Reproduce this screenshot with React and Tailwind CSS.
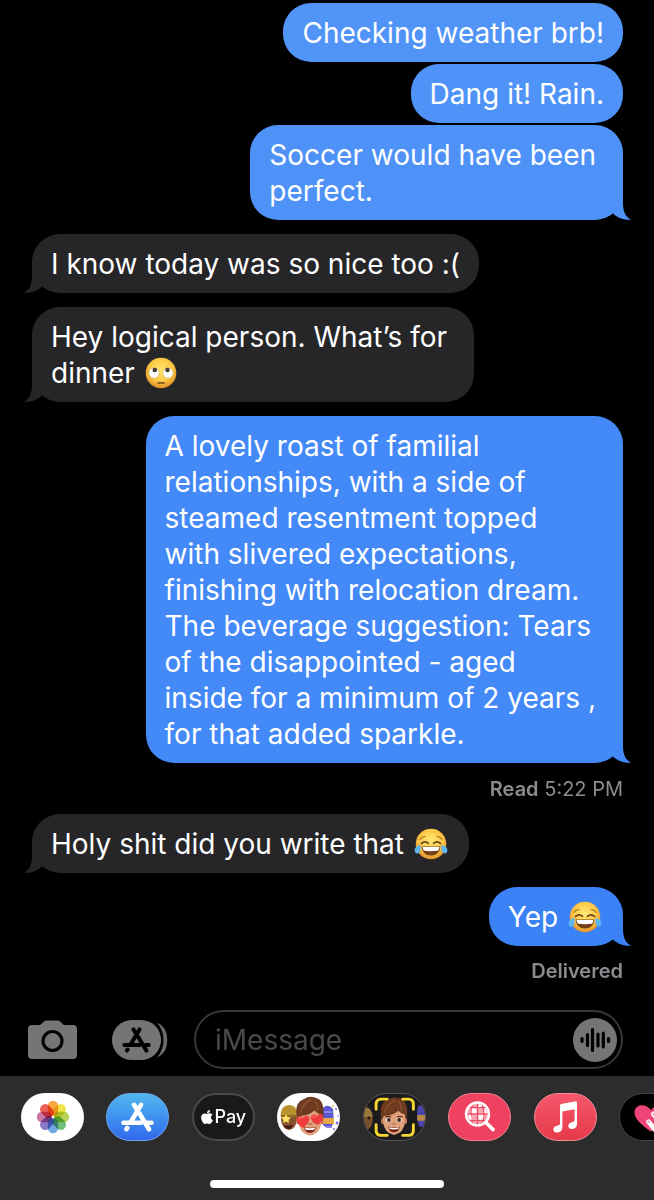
import { FaApple } from "react-icons/fa";

function Tail({ side }) {
  const mine = side === "right";
  return (
    <svg
      aria-hidden="true"
      viewBox="0 0 32 30"
      className={
        mine
          ? "absolute bottom-0 -right-2 h-[30px] w-8 fill-current"
          : "absolute bottom-0 -left-2 h-[30px] w-8 -scale-x-100 fill-current"
      }
    >
      <path d="M24 0V13C24 21.5 26.5 27 32 29.6C25.500 30.5 18.500 28 14 23.500L4 10V0Z" />
    </svg>
  );
}

function RollingEyes() {
  return (
    <svg role="img" aria-label="rolling eyes" viewBox="0 0 32 32" className="mx-0.5 -mt-1 inline-block h-8 w-8">
      <defs>
        <radialGradient id="rollFace" cx=".5" cy=".4" r=".6">
          <stop offset="0" stopColor="#ffe46b" />
          <stop offset=".6" stopColor="#fcca45" />
          <stop offset="1" stopColor="#e08f25" />
        </radialGradient>
      </defs>
      <circle cx="16" cy="16" r="15.300" fill="url(#rollFace)" />
      <circle cx="9" cy="16" r="5.200" fill="#fff" stroke="#c99a49" strokeWidth=".5" />
      <circle cx="23" cy="16" r="5.200" fill="#fff" stroke="#c99a49" strokeWidth=".5" />
      <circle cx="9.800" cy="13" r="2.300" fill="#473a34" />
      <circle cx="22.500" cy="13" r="2.300" fill="#473a34" />
      <path d="M13 26H19" stroke="#6e4418" strokeWidth="1.600" strokeLinecap="round" />
    </svg>
  );
}

function TearsOfJoy() {
  return (
    <svg role="img" aria-label="tears of joy" viewBox="0 0 34 32" className="mx-0.5 -mt-1 inline-block h-8 w-[34px]">
      <defs>
        <radialGradient id="joyFace" cx=".5" cy=".4" r=".6">
          <stop offset="0" stopColor="#ffe878" />
          <stop offset=".6" stopColor="#fdca48" />
          <stop offset="1" stopColor="#e2902a" />
        </radialGradient>
      </defs>
      <circle cx="17" cy="16" r="15.300" fill="url(#joyFace)" />
      <path d="M6 11.500Q8 8.500 11 8.500M28 11.500Q26 8.500 23 8.500" stroke="#ab7420" strokeWidth="1.200" fill="none" strokeLinecap="round" />
      <path d="M7.500 15.500Q11 12.500 14.500 15.300M19.500 15.300Q23 12.500 26.500 15.500" stroke="#6b421a" strokeWidth="1.700" fill="none" strokeLinecap="round" />
      <path d="M7.500 18.500H26.500Q25.500 27.500 17 27.500Q8.500 27.500 7.500 18.500Z" fill="#76401a" />
      <path d="M8.500 19H25.500Q25 22.500 23.500 22.800Q17 23.600 10.500 22.800Q9 22.500 8.500 19Z" fill="#fff" />
      <path d="M6.500 17Q.5 18 .6 22.500Q1 26 4 25.500Q7.500 24 6.500 17ZM27.500 17Q33.500 18 33.400 22.500Q33 26 30 25.500Q26.500 24 27.500 17Z" fill="#5eb6ee" />
    </svg>
  );
}

const EMOJI = { roll: RollingEyes, joy: TearsOfJoy };

function Bubble({ side, lines, emoji, tail = true, tone }) {
  const mine = side === "right";
  const Emoji = emoji ? EMOJI[emoji] : null;
  const wrapped = lines.length > 1;
  return (
    <div className={mine ? "flex justify-end" : "flex justify-start"}>
      <div className={`relative rounded-[28px] ${tone}`}>
        <div className="rounded-[28px] bg-current">
          <p
            className={`pt-3 pb-[11px] pl-[19px] text-[28px] leading-9 whitespace-nowrap text-white ${
              wrapped ? "pr-[27px]" : "pr-[19px]"
            }`}
          >
            {lines.map((line, i) => (
              <span key={line}>
                {i > 0 && <br />}
                {line}
              </span>
            ))}
            {Emoji && (
              <>
                {" "}
                <Emoji />
              </>
            )}
          </p>
        </div>
        {tail && <Tail side={side} />}
      </div>
    </div>
  );
}

function AppStoreGlyph({ className }) {
  return (
    <svg aria-hidden="true" viewBox="0 0 33 30" fill="none" stroke="currentColor" strokeWidth="4.600" strokeLinecap="round" className={className}>
      <path d="M13 2.800L15.500 7M20 2.800L9.500 20.500M18.500 11.500L28 27.300M2.500 20.800H20M26.500 20.800H30.500M6.200 26L5.500 27.200" />
    </svg>
  );
}

const PETALS = ["#f9a02e", "#ece034", "#b0cf45", "#63b86b", "#639fe0", "#7d6bbd", "#c4689f", "#ea4f48"];

function PhotosIcon() {
  return (
    <svg aria-hidden="true" viewBox="-17 -17 34 34" className="h-[34px] w-[34px]">
      {PETALS.map((color, i) => (
        <rect key={color} x="-5.200" y="-16.200" width="10.400" height="15" rx="5.200" fill={color} opacity=".9" transform={`rotate(${i * 45})`} className="mix-blend-multiply" />
      ))}
    </svg>
  );
}

function BoyHead({ hearts }) {
  return (
    <g>
      <ellipse cx="-11.500" cy="4" rx="2" ry="3.500" fill="#bd7857" />
      <ellipse cx="11.500" cy="4" rx="2" ry="3.500" fill="#bd7857" />
      <path d="M-11.500 -5Q-12 -13 0 -13Q12 -13 11.500 -5V4Q10.500 17 0 18.500Q-10.500 17 -11.500 4Z" fill="#e0a17d" />
      <path d="M-12.500 3Q-17 -14 -6 -18Q-1 -21.500 5 -19.500Q16 -17 13 3L11 -2.500Q7 -3.500 4.500 -6.500Q-1 -1.500 -10.500 -1Z" fill="#6e3b21" />
      <path d="M-9.500 -5Q-7 -14 1 -17M7.500 -7Q8.500 -12 5 -16" stroke="#8f5230" strokeWidth="1.400" fill="none" strokeLinecap="round" />
      {hearts ? (
        <g fill="#f13b3f">
          <path d="M-7 11C-13.500 7 -15 1.500 -11.500 -.5Q-8.500 -2 -7 1Q-4 -3 -1 0Q1.500 4 -7 11Z" />
          <path d="M8 8C.5 5 -.5 -.5 2.500 -2Q6 -3.500 7 -.5Q9.500 -5 12.500 -2Q15 2 8 8Z" />
          <path d="M-11 2Q-10 0 -9 1M3 .5Q4 -1.500 5 -.5" stroke="#ff9288" fill="none" strokeLinecap="round" />
        </g>
      ) : (
        <g>
          <ellipse cx="-5.500" cy="3" rx="2.700" ry="2" fill="#fff" />
          <ellipse cx="5.500" cy="3" rx="2.700" ry="2" fill="#fff" />
          <circle cx="-5.300" cy="3" r="1.900" fill="#352117" />
          <circle cx="5.300" cy="3" r="1.900" fill="#352117" />
          <path d="M-9 0Q-6 -1.500 -3 0M3 0Q6 -1.500 9 0" stroke="#5d321d" strokeWidth="1.300" fill="none" />
        </g>
      )}
      <path d="M-1.500 6.500Q0 8 1.500 6.500" stroke="#a9613f" strokeWidth="1.200" fill="none" />
      <path d="M-6 10Q0 11.500 6 10Q5 15.800 0 15.800Q-5 15.800 -6 10Z" fill="#7b221d" />
      <path d="M-5 10.500Q0 12 5 10.500L4.500 12.500Q0 13.500 -4.500 12.500Z" fill="#fff" />
    </g>
  );
}

function MemojiStickersIcon() {
  return (
    <svg aria-hidden="true" viewBox="0 0 63 48" className="h-12 w-full">
      <ellipse cx="12" cy="26" rx="8" ry="11" fill="#87532d" />
      <path d="M3.500 23Q4 12 12 12Q18 12 20 18V23Z" fill="#b9922f" />
      <path d="M4 23H19" stroke="#8c6b1f" strokeWidth="2" />
      <path d="M9 21L10.500 24L14 24.500L11.500 27L12 30L9 28.500L6 30L6.500 27L4 24.500L7.500 24Z" fill="#ffe16a" />
      <path d="M7 32Q12 34 16 31Q15 36 11 36Q8 36 7 32Z" fill="#411d16" />
      <path d="M46 15Q51 10 56 16L57 30Q52 38 46 32Z" fill="#5958cf" />
      <path d="M44 25H57V31H46Z" fill="#e9a848" />
      <path d="M47 19H55M49 34H55" stroke="#8e82ef" strokeWidth="2" />
      <g fill="#7b65ea">
        <circle cx="59" cy="16" r="1" /><circle cx="60" cy="30" r="1.400" /><circle cx="57" cy="36" r="1" /><circle cx="61" cy="23" r=".8" />
      </g>
      <circle cx="56" cy="13" r="1" fill="#f2bd4a" />
      <g transform="translate(33 24)"><BoyHead hearts /></g>
    </svg>
  );
}

function MemojiIcon() {
  return (
    <svg aria-hidden="true" viewBox="0 0 63 48" className="h-12 w-full">
      <path d="M0 15Q8 16 9 26Q9 34 3 38H0Z" fill="#79502f" />
      <path d="M0 14Q8 13 9 24H0Z" fill="#987a3c" />
      <circle cx="5" cy="25" r="1.500" fill="#22160f" />
      <path d="M56 12H63V34H57Q53 22 56 12Z" fill="#4a45ae" />
      <path d="M55 22H63V28H55Z" fill="#b8893f" />
      <g transform="translate(31 24)"><BoyHead /></g>
      <path d="M12.500 16V11Q12.500 5.500 18 5.500H24M40 5.500H46Q51 5.500 51 11V16M51 32V38Q51 43 46 43H40M24 43H18Q12.500 43 12.500 38V32" stroke="#f7d62f" strokeWidth="3" fill="none" strokeLinecap="round" />
    </svg>
  );
}

function ImagesIcon() {
  return (
    <svg aria-hidden="true" viewBox="0 0 32 32" fill="none" stroke="#fff" className="h-8 w-8">
      <circle cx="13.500" cy="13" r="11.500" fill="#f8a3ae" />
      <path d="M5 6.500H22M2 13H25M5 19.500H22M13.500 2V24.500M9 3Q5 13 9 23.500M18 3Q22 13 18 23.500" stroke="#ee4563" strokeWidth="1.100" />
      <path d="M8 7.500H12.500V12H7.500ZM14.500 14H19.500L19 18.500H14.500ZM14.500 3.500H17L18 6H14.500ZM4 14H7L8 18.500H5.500ZM20.500 7.500H22L23 12H20.500Z" fill="#fff" stroke="none" />
      <circle cx="13.500" cy="13" r="11.500" strokeWidth="2.400" />
      <path d="M22 21.500L29 28.500" strokeWidth="3.800" strokeLinecap="round" />
    </svg>
  );
}

function MusicIcon() {
  return (
    <svg aria-hidden="true" viewBox="0 0 26 32" fill="#fff" className="h-8 w-[26px]">
      <path d="M8 4.500Q8 3.200 9.300 2.900L23.500 .3Q25 0 25 1.500V22.500Q25 27.500 20 28Q16.500 28.200 16.300 25Q16.300 22 20 21.200Q22.600 20.800 22.600 19V8.300L10.400 10.600V26Q10.400 31 5.400 31.600Q1.500 31.800 1.400 28.500Q1.400 25.500 5 24.700Q8 24.200 8 22.500Z" />
    </svg>
  );
}

function DigitalTouchIcon() {
  return (
    <svg aria-hidden="true" viewBox="0 0 63 48" className="h-12 w-full">
      <path d="M32 39C20 31 14 24 15 18C17 10 27 10 32 17C37 10 47 10 49 18C50 24 44 31 32 39Z" fill="#f04478" />
      <g stroke="#fff" strokeWidth="5" strokeLinecap="round">
        <path d="M29.500 29L36 37M34.500 21L43 31" />
      </g>
      <circle cx="29.500" cy="29" r="1.500" fill="#f7a8bf" />
      <circle cx="34.500" cy="21" r="1.500" fill="#f7a8bf" />
    </svg>
  );
}

function DrawerApp({ label, tone, children }) {
  return (
    <button type="button" aria-label={label} className={`flex h-12 w-[63px] shrink-0 items-center justify-center overflow-hidden rounded-full ${tone}`}>
      {children}
    </button>
  );
}

export default function App() {
  return (
    <div className="flex min-h-screen flex-col overflow-x-hidden bg-black font-['Inter','Liberation_Sans',sans-serif] text-white">
      <main className="flex grow flex-col pt-[3px] pr-[31px] pl-8">
        <div className="flex flex-col gap-[2px]">
          <Bubble side="right" tail={false} tone="text-[#5094f8]" lines={["Checking weather brb!"]} />
          <Bubble side="right" tail={false} tone="text-[#4f93f8]" lines={["Dang it! Rain."]} />
          <Bubble side="right" tone="text-[#4e92f8]" lines={["Soccer would have been", "perfect."]} />
        </div>
        <div className="mt-[14px] flex flex-col gap-[14px]">
          <Bubble side="left" tone="text-[#262629]" lines={["I know today was so nice too :("]} />
          <Bubble side="left" tone="text-[#262629]" lines={["Hey logical person. What’s for", "dinner"]} emoji="roll" />
          <Bubble
            side="right"
            tone="text-[#4389f7]"
            lines={[
              "A lovely roast of familial",
              "relationships, with a side of",
              "steamed resentment topped",
              "with slivered expectations,",
              "finishing with relocation dream.",
              "The beverage suggestion: Tears",
              "of the disappointed - aged",
              "inside for a minimum of 2 years ,",
              "for that added sparkle.",
            ]}
          />
        </div>
        <p className="mt-3 text-right text-xl leading-7 text-[#8b8b90]">
          <span className="font-semibold">Read</span> 5:22 PM
        </p>
        <div className="mt-[11px] flex flex-col gap-[14px]">
          <Bubble side="left" tone="text-[#262629]" lines={["Holy shit did you write that"]} emoji="joy" />
          <Bubble side="right" tone="text-[#3b82f7]" lines={["Yep"]} emoji="joy" />
        </div>
        <p className="mt-[11px] text-right text-xl leading-7 font-semibold text-[#8b8b90]">Delivered</p>
      </main>

      <form className="flex items-center pt-5 pr-[31px] pb-[7px] pl-7" onSubmit={(e) => e.preventDefault()}>
        <button type="button" aria-label="Camera" className="mr-[34px] shrink-0">
          <svg aria-hidden="true" viewBox="0 0 50 40" className="h-10 w-[50px]">
            <path d="M4 5H11Q13 5 14.500 3L15.500 1.800Q17 .5 19 .5H29Q31 .5 32.500 1.800L34 3.500Q35.500 5 37.500 5H45Q49 5 49 9V35Q49 39 45 39H4Q0 39 0 35V9Q0 5 4 5Z" fill="#757575" />
            <circle cx="24.500" cy="21" r="9.500" fill="none" stroke="#000" strokeWidth="3.200" />
          </svg>
        </button>
        <button type="button" aria-label="Apps" className="mr-[26px] flex shrink-0">
          <span className="flex h-10 w-[49px] items-center justify-center rounded-full bg-[#757575] text-black">
            <AppStoreGlyph className="h-[26px] w-[29px]" />
          </span>
          <svg aria-hidden="true" viewBox="0 0 11 40" className="-ml-1 h-10 w-[11px]">
            <path d="M0 2.500Q10.500 7 10.300 20Q10.500 33 0 37.500Q6.500 30 6.500 20Q6.500 10 0 2.500Z" fill="#6b6b6b" />
          </svg>
        </button>
        <div className="flex h-[59px] min-w-0 grow items-center rounded-full border-2 border-[#373739] pr-1 pl-[19px]">
          <input aria-label="iMessage" placeholder="iMessage" className="min-w-0 grow bg-transparent text-[28px] leading-9 outline-none placeholder:text-[#4a4a4d]" />
          <button type="button" aria-label="Record audio" className="flex h-11 w-11 shrink-0 items-center justify-center rounded-full bg-[#757575]">
            <svg aria-hidden="true" viewBox="0 0 32 28" stroke="#000" strokeWidth="3.200" strokeLinecap="round" className="h-7 w-8">
              <path d="M3 12.500V15.500M8.500 8.500V19.500M13.500 3.500V24.500M19 8V20M24.300 7V21M29.500 12.500V15.500" />
            </svg>
          </button>
        </div>
      </form>

      <footer className="bg-[#2c2c2c] pt-[17px] pb-3">
        <nav aria-label="iMessage apps" className="-mr-7 flex justify-between pl-[21px]">
          <DrawerApp label="Photos" tone="bg-white"><PhotosIcon /></DrawerApp>
          <DrawerApp label="App Store" tone="border border-[#6fa6f0] bg-linear-to-b from-[#52b7ee] to-[#3567ec]">
            <AppStoreGlyph className="h-[30px] w-[33px]" />
          </DrawerApp>
          <DrawerApp label="Apple Pay" tone="border-2 border-[#49494b] bg-[#19191a]">
            <FaApple className="h-4 w-[14px] shrink-0" />
            <span className="text-lg leading-6 font-medium">Pay</span>
          </DrawerApp>
          <DrawerApp label="Memoji stickers" tone="bg-white"><MemojiStickersIcon /></DrawerApp>
          <DrawerApp label="Memoji" tone="border border-[#555558] bg-[#1b1b1d]"><MemojiIcon /></DrawerApp>
          <DrawerApp label="Images" tone="border border-[#f48092] bg-[#ee4260]"><ImagesIcon /></DrawerApp>
          <DrawerApp label="Music" tone="border border-[#f28b96] bg-linear-to-b from-[#f4566b] to-[#e63a49]"><MusicIcon /></DrawerApp>
          <DrawerApp label="Digital Touch" tone="border border-[#444447] bg-black"><DigitalTouchIcon /></DrawerApp>
        </nav>
        <div className="mx-auto mt-[39px] h-2 w-[234px] rounded-full bg-white" />
      </footer>
    </div>
  );
}
